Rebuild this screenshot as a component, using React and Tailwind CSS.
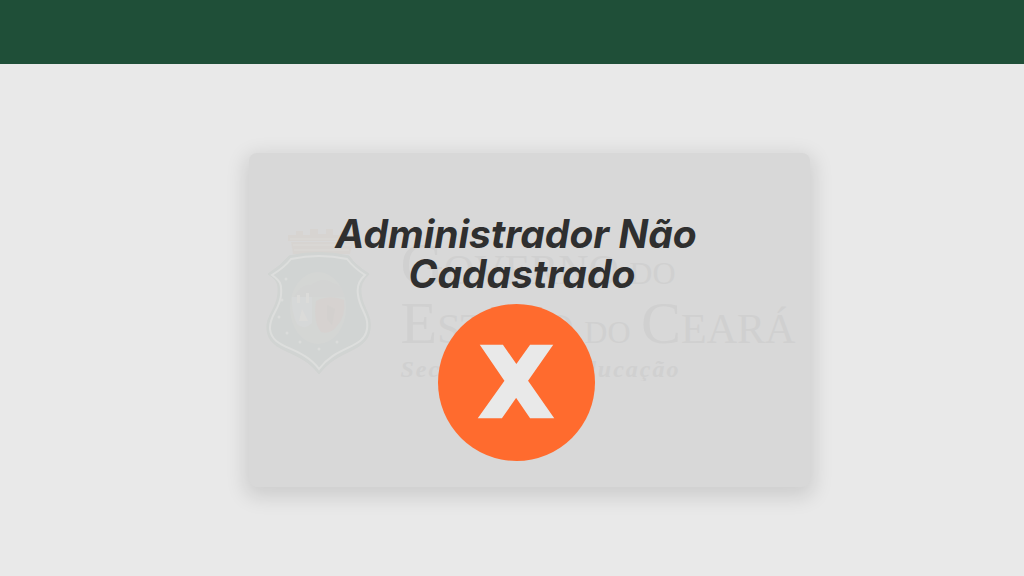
function ErrorIcon() {
  return (
    <svg viewBox="0 0 156 156" className="size-[157px]" role="img" aria-label="Erro">
      <circle cx="78" cy="78" r="78" fill="#ff6b2e" />
      <path d="M41.5 40.500h23L115.500 113.500h-24Z M91.500 40.500h23L63.500 113.500h-24Z" fill="#e9e9e9" />
    </svg>
  );
}

function Crest() {
  return (
    <svg viewBox="0 0 108 150" className="h-[150px] w-[108px] shrink-0 opacity-60" aria-hidden="true">
      <g fill="#d7d3ce">
        <path d="M23 8h8V4h7v4h7V2h8v5h8V2h7v6h7V4h7v4h8v6H23Z" />
        <path d="M26 15h62l-3 12H28Z" />
      </g>
      <path d="M25 12h64M28 18h58M29 23h55" stroke="#dddbd7" strokeWidth="1" fill="none" />
      <path
        d="M24 29Q54 22 84 29Q90 38 104 47Q94 56 96 67C98 82 107 88 105 102C102 126 73 121 54 147C35 121 4 127 2 102C1 89 12 81 13 67C14 56 12 53 3 47Q16 39 24 29Z"
        fill="#cdd3d0"
        stroke="#cdd2cf"
        strokeWidth="1"
      />
      <path
        d="M26 32Q54 26 82 32Q89 41 100 48Q91 56 93 68C95 83 104 88 102 102C99 122 72 118 54 142C36 118 7 123 5 102C4 89 15 82 16 68C17 56 15 54 7 48Q20 40 26 32Z"
        fill="none"
        stroke="#e1e3e1"
        strokeWidth="2"
      />
      <ellipse cx="53" cy="81" rx="28" ry="36" fill="#d3d5d3" />
      <path d="M29 70q8-14 17-12q12-9 22-2q9 1 11 14Z" fill="#d0d3d0" />
      <path d="M27 70h20v26q-8 8-15 1q-6-12-5-27Z" fill="#d6d8d8" />
      <path d="M37 82l6 12h-9Z M32 68h3v8h-3Z M41 66h3v10h-3Z" fill="#dededb" />
      <path d="M51 74q14-7 28-1q2 16-7 26q-7 9-16 6q-8-10-5-31Z" fill="#d5cfcb" />
      <path d="M62 78l8 4-3 16-5-6Z" fill="#d0ccc8" />
      <g fill="#dde0dd">
        <circle cx="21" cy="52" r="1.500" />
        <circle cx="17" cy="73" r="1.500" />
        <circle cx="14" cy="90" r="1.500" />
        <circle cx="22" cy="106" r="1.500" />
        <circle cx="35" cy="115" r="1.500" />
        <circle cx="54" cy="122" r="1.500" />
        <circle cx="72" cy="115" r="1.500" />
      </g>
    </svg>
  );
}

function Watermark() {
  return (
    <div className="col-start-1 row-start-1 flex gap-7 self-start overflow-hidden pl-4 pt-[74px] whitespace-nowrap font-['Liberation_Serif',serif] text-[#d0d0d0]">
      <Crest />
      <div className="flex flex-col pt-3">
        <p className="text-[42px] leading-[50px]">
          <span className="text-[60px]">G</span>OVERNO <span className="text-[32px]">DO</span>
        </p>
        <p className="text-[42px] leading-[50px]">
          <span className="text-[60px]">E</span>STADO <span className="text-[32px]">DO</span>{" "}
          <span className="text-[60px]">C</span>EARÁ
        </p>
        <p className="text-[24px] leading-[24px] italic tracking-[2px] font-bold">Secretaria da Educação</p>
      </div>
    </div>
  );
}

export default function App() {
  return (
    <div className="flex min-h-screen flex-col bg-[#e9e9e9]">
      <header className="h-16 bg-[#1f4f38]" />
      <main className="flex flex-1 items-center justify-center pl-[34px]">
        <section className="grid w-full max-w-[561px] rounded-lg bg-[#d8d8d8] shadow-[0_6px_20px_4px_rgba(0,0,0,0.12)]">
          <Watermark />
          <div className="relative col-start-1 row-start-1 flex flex-col items-center gap-2.5 pt-[61px] pr-[26px] pb-[26px]">
            <h1 className="text-center font-['Inter',sans-serif] text-[39px] leading-[40px] font-bold italic text-[#2f2f2f]">
              <span className="block">Administrador Não</span>
              <span className="block pl-3">Cadastrado</span>
            </h1>
            <ErrorIcon />
          </div>
        </section>
      </main>
    </div>
  );
}
